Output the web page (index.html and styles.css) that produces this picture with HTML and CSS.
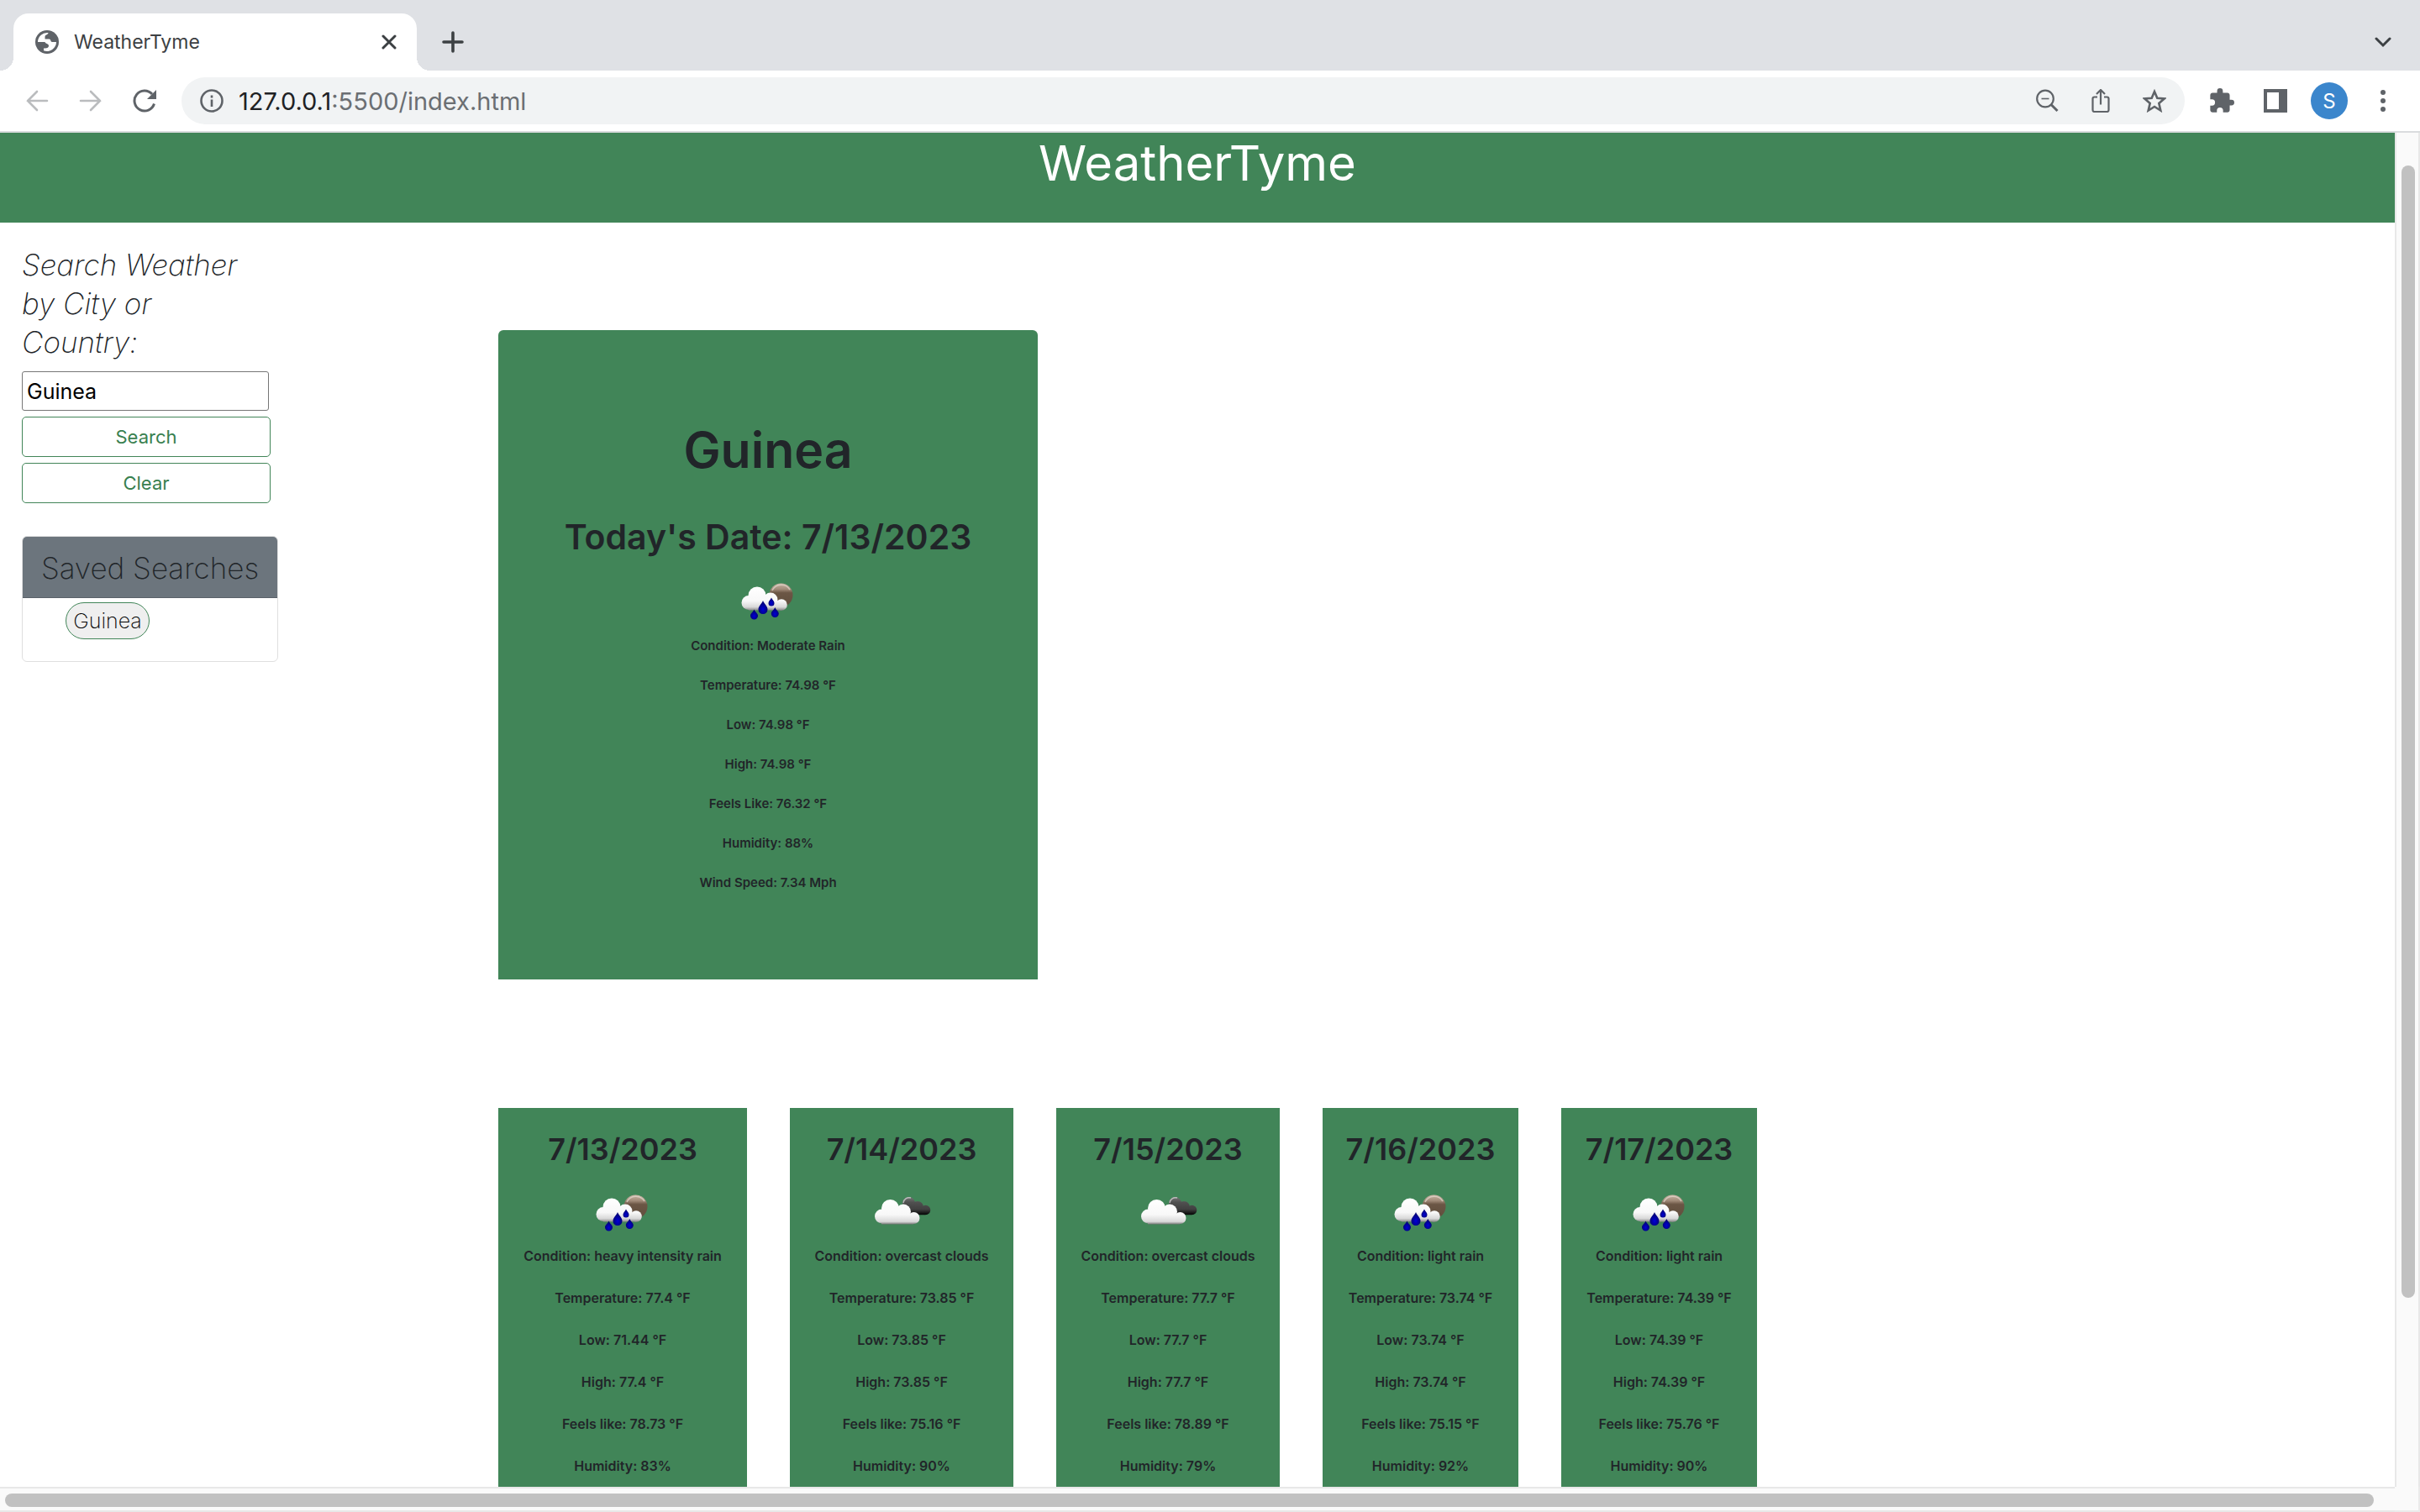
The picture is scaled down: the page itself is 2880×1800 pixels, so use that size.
FILE: index.html
```html
<!DOCTYPE html>
<html lang="en">
<head>
<meta charset="utf-8">
<title>WeatherTyme</title>
<link rel="stylesheet" href="styles.css">
</head>
<body>
<svg class="sprite" aria-hidden="true">
  <defs>
    <linearGradient id="cloud" gradientUnits="userSpaceOnUse" x1="0" y1="16" x2="0" y2="45">
      <stop offset="0" stop-color="#fff"/><stop offset=".6" stop-color="#f8f8f8"/><stop offset=".85" stop-color="#d8d8d8"/><stop offset="1" stop-color="#808080"/>
    </linearGradient>
    <linearGradient id="cloud-low" gradientUnits="userSpaceOnUse" x1="0" y1="18" x2="0" y2="48">
      <stop offset="0" stop-color="#fff"/><stop offset=".6" stop-color="#f8f8f8"/><stop offset=".88" stop-color="#d8d8d8"/><stop offset="1" stop-color="#666"/>
    </linearGradient>
    <linearGradient id="moon" x1="0" y1="0" x2="0" y2="1">
      <stop offset="0" stop-color="#c9b5a4"/><stop offset=".25" stop-color="#a08a78"/><stop offset=".4" stop-color="#6b5645"/><stop offset="1" stop-color="#604e3c"/>
    </linearGradient>
    <linearGradient id="dark" gradientUnits="userSpaceOnUse" x1="0" y1="15" x2="0" y2="36">
      <stop offset="0" stop-color="#777"/><stop offset=".3" stop-color="#505050"/><stop offset=".7" stop-color="#404040"/><stop offset="1" stop-color="#050505"/>
    </linearGradient>
    <radialGradient id="drop" cx=".5" cy=".65" r=".5">
      <stop offset="0" stop-color="#0000d8"/><stop offset="1" stop-color="#000078"/>
    </radialGradient>
  </defs>
  <symbol id="rain" viewBox="-8 0 98 60">
    <circle cx="56.500" cy="26.500" r="14" fill="url(#moon)"/>
    <path d="M46 21a12 12 0 0 1 21-1" fill="none" stroke="#e2d8ce" stroke-width="1.500" opacity=".7"/>
    <g fill="url(#cloud)"><circle cx="28" cy="27" r="10.500"/><circle cx="18" cy="35.500" r="8.500"/><circle cx="44" cy="32" r="8.500"/><circle cx="57" cy="38" r="6.800"/><path d="M18 30h28l11 6v8.500H18z"/></g>
    <path fill="url(#drop)" d="M35 33c1.500 4 5.500 6.500 5.500 10.500a5.500 5.500 0 0 1-11 0C29.500 39.500 33.500 37 35 33z"/>
    <path fill="url(#drop)" d="M45 29.500c1 2.500 3.500 4 3.500 6.500a3.500 3.500 0 0 1-7 0c0-2.500 2.500-4 3.500-6.500z"/>
    <path fill="url(#drop)" d="M24.500 43.500c1 3 4.500 4.800 4.500 7.500a4.500 4.500 0 0 1-9 0c0-2.700 3.500-4.500 4.500-7.500z"/>
    <path fill="url(#drop)" d="M49.300 41c1 3 4.500 4.800 4.500 7.500a4.500 4.500 0 0 1-9 0c0-2.700 3.500-4.500 4.500-7.500z"/>
  </symbol>
  <symbol id="clouds" viewBox="-6 0 98 60">
    <g fill="url(#dark)"><circle cx="51.500" cy="22.500" r="7.500"/><circle cx="62" cy="27" r="7"/><circle cx="71.500" cy="30.500" r="5.800"/><path d="M46 22h14l11 5v9.200H46z"/></g>
    <path d="M45 22a7 7 0 0 1 9-6" fill="none" stroke="#d0d0d0" stroke-width="1.500" opacity=".8"/>
    <g fill="url(#cloud-low)"><circle cx="29.500" cy="28.500" r="10.500"/><circle cx="19.500" cy="38" r="8.500"/><circle cx="45" cy="32.500" r="9"/><circle cx="57.500" cy="40" r="7"/><path d="M19 32h28l10 6v9.500H19z"/></g>
  </symbol>
</svg>

<div class="browser">
  <div class="tabs">
    <div class="tab">
      <svg width="28" height="28" viewBox="0 0 28 28"><circle cx="14" cy="14" r="14" fill="#5f6368"/><path fill="#fff" d="M3 14A11 11 0 0 1 15.500 3.100c-.5 2.900-4 1.900-4 4.900v2.500h5c2.200 0 1.500 3.500 3.500 3.500h5a11 11 0 0 1-15 10.200V21.500c4 .5 6-1 6-3 0-3-4-2-4.500-4.500z"/></svg>
      <span class="tab-title">WeatherTyme</span>
      <button class="icon-btn" aria-label="Close tab"><svg width="18" height="18" viewBox="0 0 18 18"><path d="M2 2l14 14M16 2L2 16" stroke="#3c4043" stroke-width="3" stroke-linecap="round"/></svg></button>
    </div>
    <button class="icon-btn new-tab" aria-label="New tab"><svg width="26" height="26" viewBox="0 0 26 26"><path d="M13 2v22M2 13h22" stroke="#3c4043" stroke-width="3.600" stroke-linecap="round"/></svg></button>
    <button class="icon-btn tab-search" aria-label="Search tabs"><svg width="20" height="14" viewBox="0 0 20 14"><path d="M2 3l8 8 8-8" fill="none" stroke="#3c4043" stroke-width="3" stroke-linecap="round"/></svg></button>
  </div>
  <div class="toolbar">
    <button class="icon-btn" aria-label="Back"><svg width="28" height="28" viewBox="0 0 28 28"><path d="M26 14H3M14 3L3 14l11 11" fill="none" stroke="#babcbe" stroke-width="2.600" stroke-linecap="round"/></svg></button>
    <button class="icon-btn" aria-label="Forward"><svg width="28" height="28" viewBox="0 0 28 28"><path d="M2 14h23M14 3l11 11-11 11" fill="none" stroke="#babcbe" stroke-width="2.600" stroke-linecap="round"/></svg></button>
    <button class="icon-btn" aria-label="Reload"><svg width="28" height="28" viewBox="0 0 28 28"><path d="M25.500 17.500A12 12 0 1 1 23 6" fill="none" stroke="#5f6368" stroke-width="3"/><path d="M28 1v11H17z" fill="#5f6368"/></svg></button>
    <div class="omnibox">
      <svg width="28" height="28" viewBox="0 0 28 28"><circle cx="14" cy="14" r="12.500" fill="none" stroke="#5f6368" stroke-width="2.600"/><path d="M14 12.500v8.500M14 7.500v3" stroke="#5f6368" stroke-width="2.600"/></svg>
      <div class="url"><span>127.0.0.1</span>:5500/index.html</div>
      <button class="icon-btn" aria-label="Zoom out"><svg width="28" height="28" viewBox="0 0 28 28"><circle cx="12" cy="11.500" r="9.800" fill="none" stroke="#5f6368" stroke-width="2.200"/><path d="M7.500 11.500h9" stroke="#5f6368" stroke-width="1.600"/><path d="M19 18.500l7.500 7.500" stroke="#5f6368" stroke-width="3"/></svg></button>
      <button class="icon-btn" aria-label="Share"><svg width="28" height="28" viewBox="0 0 28 28"><path d="M10 9.500H6.500a2 2 0 0 0-2 2V25a2 2 0 0 0 2 2h15a2 2 0 0 0 2-2V11.500a2 2 0 0 0-2-2H18M14 18.500V1.500M9 6l5-5 5 5" fill="none" stroke="#5f6368" stroke-width="2.200"/></svg></button>
      <button class="icon-btn" aria-label="Bookmark"><svg width="28" height="28" viewBox="0 0 28 28"><path d="M14 3l3.300 7.700 8.400.700-6.400 5.500 2 8.600L14 21 6.700 25.500l2-8.600-6.400-5.500 8.400-.700z" fill="none" stroke="#5f6368" stroke-width="2.600"/></svg></button>
    </div>
    <div class="actions">
      <button class="icon-btn" aria-label="Extensions"><svg width="30" height="30" viewBox="1 1 22 22"><path fill="#5f6368" d="M20.500 11H19V7c0-1.100-.900-2-2-2h-4V3.500a2.500 2.500 0 0 0-5 0V5H4c-1.100 0-2 .900-2 2v3.800h1.500a2.700 2.700 0 0 1 0 5.400H2V20c0 1.100.900 2 2 2h3.800v-1.500a2.700 2.700 0 0 1 5.400 0V22H17c1.100 0 2-.900 2-2v-4h1.500a2.500 2.500 0 0 0 0-5z"/></svg></button>
      <button class="icon-btn" aria-label="Side panel"><svg width="28" height="28" viewBox="0 0 28 28"><path fill="#5f6368" fill-rule="evenodd" d="M0 0h28v28H0zM4 4v20h14V4z"/></svg></button>
      <button class="avatar" aria-label="Profile">S</button>
      <button class="icon-btn" aria-label="Menu"><svg width="6" height="26" viewBox="0 0 6 26"><g fill="#5f6368"><circle cx="3" cy="3" r="3"/><circle cx="3" cy="13" r="3"/><circle cx="3" cy="23" r="3"/></g></svg></button>
    </div>
  </div>

  <div class="viewport">
    <div class="page">
      <header class="banner"><h1>WeatherTyme</h1></header>
      <div class="columns">
        <aside class="sidebar">
          <form class="search">
            <label for="city">Search Weather by City or Country:</label>
            <input id="city" type="text" value="Guinea">
            <button type="button">Search</button>
            <button type="button">Clear</button>
          </form>
          <section class="saved">
            <h2>Saved Searches</h2>
            <div class="saved-list"><button>Guinea</button></div>
          </section>
        </aside>
        <main class="results">
          <section class="today">
            <h2>Guinea</h2>
            <h3>Today's Date: 7/13/2023</h3>
            <svg class="weather"><use href="#rain"/></svg>
            <p>Condition: Moderate Rain</p>
            <p>Temperature: 74.98 °F</p>
            <p>Low: 74.98 °F</p>
            <p>High: 74.98 °F</p>
            <p>Feels Like: 76.32 °F</p>
            <p>Humidity: 88%</p>
            <p>Wind Speed: 7.34 Mph</p>
          </section>
          <div class="forecast">
            <section class="day long"><h3>7/13/2023</h3><svg class="weather"><use href="#rain"/></svg><p>Condition: heavy intensity rain</p><p>Temperature: 77.4 °F</p><p>Low: 71.44 °F</p><p>High: 77.4 °F</p><p>Feels like: 78.73 °F</p><p>Humidity: 83%</p></section>
            <section class="day medium"><h3>7/14/2023</h3><svg class="weather"><use href="#clouds"/></svg><p>Condition: overcast clouds</p><p>Temperature: 73.85 °F</p><p>Low: 73.85 °F</p><p>High: 73.85 °F</p><p>Feels like: 75.16 °F</p><p>Humidity: 90%</p></section>
            <section class="day medium"><h3>7/15/2023</h3><svg class="weather"><use href="#clouds"/></svg><p>Condition: overcast clouds</p><p>Temperature: 77.7 °F</p><p>Low: 77.7 °F</p><p>High: 77.7 °F</p><p>Feels like: 78.89 °F</p><p>Humidity: 79%</p></section>
            <section class="day"><h3>7/16/2023</h3><svg class="weather"><use href="#rain"/></svg><p>Condition: light rain</p><p>Temperature: 73.74 °F</p><p>Low: 73.74 °F</p><p>High: 73.74 °F</p><p>Feels like: 75.15 °F</p><p>Humidity: 92%</p></section>
            <section class="day"><h3>7/17/2023</h3><svg class="weather"><use href="#rain"/></svg><p>Condition: light rain</p><p>Temperature: 74.39 °F</p><p>Low: 74.39 °F</p><p>High: 74.39 °F</p><p>Feels like: 75.76 °F</p><p>Humidity: 90%</p></section>
          </div>
        </main>
      </div>
    </div>
    <div class="vbar"><i></i></div>
    <div class="hbar"><i></i></div>
    <div class="corner"></div>
  </div>
</div>
</body>
</html>
```
FILE: styles.css
```css
* { box-sizing: border-box; }
body { margin: 0; font-family: Inter, "Liberation Sans", sans-serif; color: #212529; background: #fff; }
h1, h2, h3, p { margin: 0; }
button { font-family: inherit; cursor: pointer; }
svg { display: block; flex: none; }
.sprite { position: absolute; width: 0; height: 0; }

.browser { height: 100vh; display: flex; flex-direction: column; overflow: hidden; }
.icon-btn { display: flex; border: 0; padding: 0; background: none; }

.tabs { height: 84px; flex: none; display: flex; align-items: center; background: #dfe1e5; padding: 16px 34px 0 16px; }
.tab { position: relative; width: 480px; height: 68px; display: flex; align-items: center; padding: 0 24px 0 26px; background: #fff; border-radius: 18px 18px 0 0; }
.tab::before, .tab::after { content: ""; position: absolute; bottom: 0; width: 16px; height: 16px; }
.tab::before { left: -16px; background: radial-gradient(circle at 0 0, #dfe1e5 16px, #fff 16px); }
.tab::after { right: -16px; background: radial-gradient(circle at 100% 0, #dfe1e5 16px, #fff 16px); }
.tab-title { flex: 1; padding-left: 18px; font-size: 23px; color: #3c4043; }
.new-tab { margin-left: 30px; }
.tab-search { margin-left: auto; }

.toolbar { height: 74px; flex: none; display: flex; align-items: center; border-bottom: 2px solid #dadcde; padding: 0 12px 0 30px; gap: 36px; }
.omnibox { flex: 1; height: 56px; display: flex; align-items: center; gap: 36px; margin: 0 -24px 0 -6px; padding: 0 22px; border-radius: 28px; background: #f1f3f4; }
.url { flex: 1; margin-left: -18px; font-size: 29px; color: #6b6f73; }
.url span { color: #202124; }
.actions { display: grid; grid-template-columns: repeat(4, 64px); place-items: center; }
.avatar { width: 44px; height: 44px; border: 0; border-radius: 50%; padding: 0; background: #3b86cc; color: #fff; font-size: 24px; }

.viewport { flex: 1; min-height: 0; display: grid; grid-template: minmax(0, 1fr) 30px / minmax(0, 1fr) 30px; }
.page { overflow: hidden; }
.banner { height: 107px; background: #418558; color: #fff; text-align: center; }
.banner h1 { font-size: 58px; line-height: 72px; font-weight: 400; }
.columns { display: flex; padding-left: 26px; }
.sidebar { width: 305px; flex: none; padding-top: 27px; }
.search { display: flex; flex-direction: column; align-items: flex-start; gap: 7px; }
.search label { max-width: 280px; margin-bottom: 5px; font-size: 35px; line-height: 46px; font-weight: 200; font-style: italic; }
.search input { width: 294px; height: 47px; padding: 0 5px; border: 1px solid #767676; border-radius: 3px; font: 400 25px Inter, sans-serif; color: #000; }
.search button { width: 296px; height: 48px; border: 1px solid #418558; border-radius: 5px; background: #fff; color: #38804f; font-size: 22px; font-weight: 400; }
.saved { margin-top: 39px; border: 1px solid #dfdfdf; border-radius: 6px; overflow: hidden; }
.saved h2 { height: 73px; line-height: 74px; text-align: center; background: #6c757d; border-bottom: 1px solid #5a6169; font-size: 35px; font-weight: 200; white-space: nowrap; }
.saved-list { height: 75px; padding: 5px 51px; }
.saved-list button { width: 100px; height: 44px; padding: 0; border: 1px solid #418558; border-radius: 22px; background: #efefef; color: #000; font-size: 25px; font-weight: 200; }

.results { flex: 1; padding: 128px 0 0 262px; }
.today { width: 642px; height: 773px; padding-top: 100px; background: #418558; border-radius: 6px 6px 0 0; text-align: center; }
.today h2 { font-size: 59px; line-height: 86px; font-weight: 600; }
.today h3 { padding-top: 34px; font-size: 41px; line-height: 52px; font-weight: 600; }
.weather { width: 98px; height: 60px; margin: 17px auto 0; }
.today .weather { margin-bottom: 3px; }
.today p { font-size: 15px; line-height: 47px; font-weight: 600; }
.forecast { display: flex; align-items: flex-start; gap: 51px; padding-top: 153px; }
.day { width: 233px; padding: 24px 0 100px; background: #418558; text-align: center; }
.day.medium { width: 266px; }
.day.long { width: 296px; }
.day h3 { font-size: 36px; line-height: 50px; font-weight: 600; }
.day p { font-size: 16px; line-height: 50px; font-weight: 600; }

.vbar { border: solid #e8e8e8; border-width: 0 2px; background: #fafafa; padding: 39px 4px 225px 6px; }
.vbar i { display: block; height: 100%; width: 16px; border-radius: 8px; background: #c1c1c1; }
.hbar { border: solid #e8e8e8; border-width: 2px 0; background: #fafafa; padding: 6px 25px 0 6px; }
.hbar i { display: block; height: 16px; border-radius: 8px; background: #c1c1c1; }
.corner { border: solid #ebebeb; border-width: 0 2px 2px 0; background: #fafafa; }
```
